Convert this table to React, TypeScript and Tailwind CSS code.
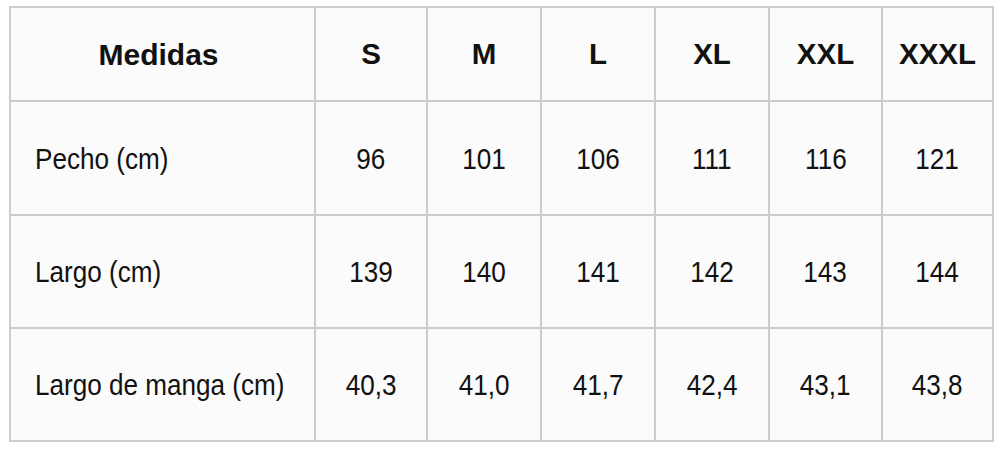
import { Fragment } from 'react';

const sizes = ['S', 'M', 'L', 'XL', 'XXL', 'XXXL'];

const rows: { label: string; values: string[] }[] = [
  { label: 'Pecho (cm)', values: ['96', '101', '106', '111', '116', '121'] },
  { label: 'Largo (cm)', values: ['139', '140', '141', '142', '143', '144'] },
  { label: 'Largo de manga (cm)', values: ['40,3', '41,0', '41,7', '42,4', '43,1', '43,8'] },
];

const cell = 'flex items-center border-r-2 border-b-2 border-[#cdcdcd]';

export default function App() {
  return (
    <div className="min-h-screen bg-white pt-[6px] pl-[9px] font-['Liberation_Sans',Arial,sans-serif] text-[#111]">
      <div className="grid w-max grid-cols-[305px_112px_114px_114px_114px_113px_111px] grid-rows-[94px_114px_113px_113px] border-l-2 border-t-2 border-[#cdcdcd] bg-[#fbfbfb]">
        {/* header */}
        <div className={`${cell} justify-center pr-2`}>
          <span className="text-[30px] font-bold">Medidas</span>
        </div>
        {sizes.map(s => (
          <div key={s} className={`${cell} justify-center`}>
            <span className="text-[29.5px] font-bold">{s}</span>
          </div>
        ))}

        {/* body */}
        {rows.map(r => (
          <Fragment key={r.label}>
            <div className={`${cell} pl-6`}>
              <span className="inline-block origin-left scale-x-[0.87] whitespace-nowrap text-[30px]">{r.label}</span>
            </div>
            {r.values.map((v, i) => (
              <div key={i} className={`${cell} justify-center`}>
                <span className="inline-block scale-x-[0.87] text-[30px]">{v}</span>
              </div>
            ))}
          </Fragment>
        ))}
      </div>
    </div>
  );
}
